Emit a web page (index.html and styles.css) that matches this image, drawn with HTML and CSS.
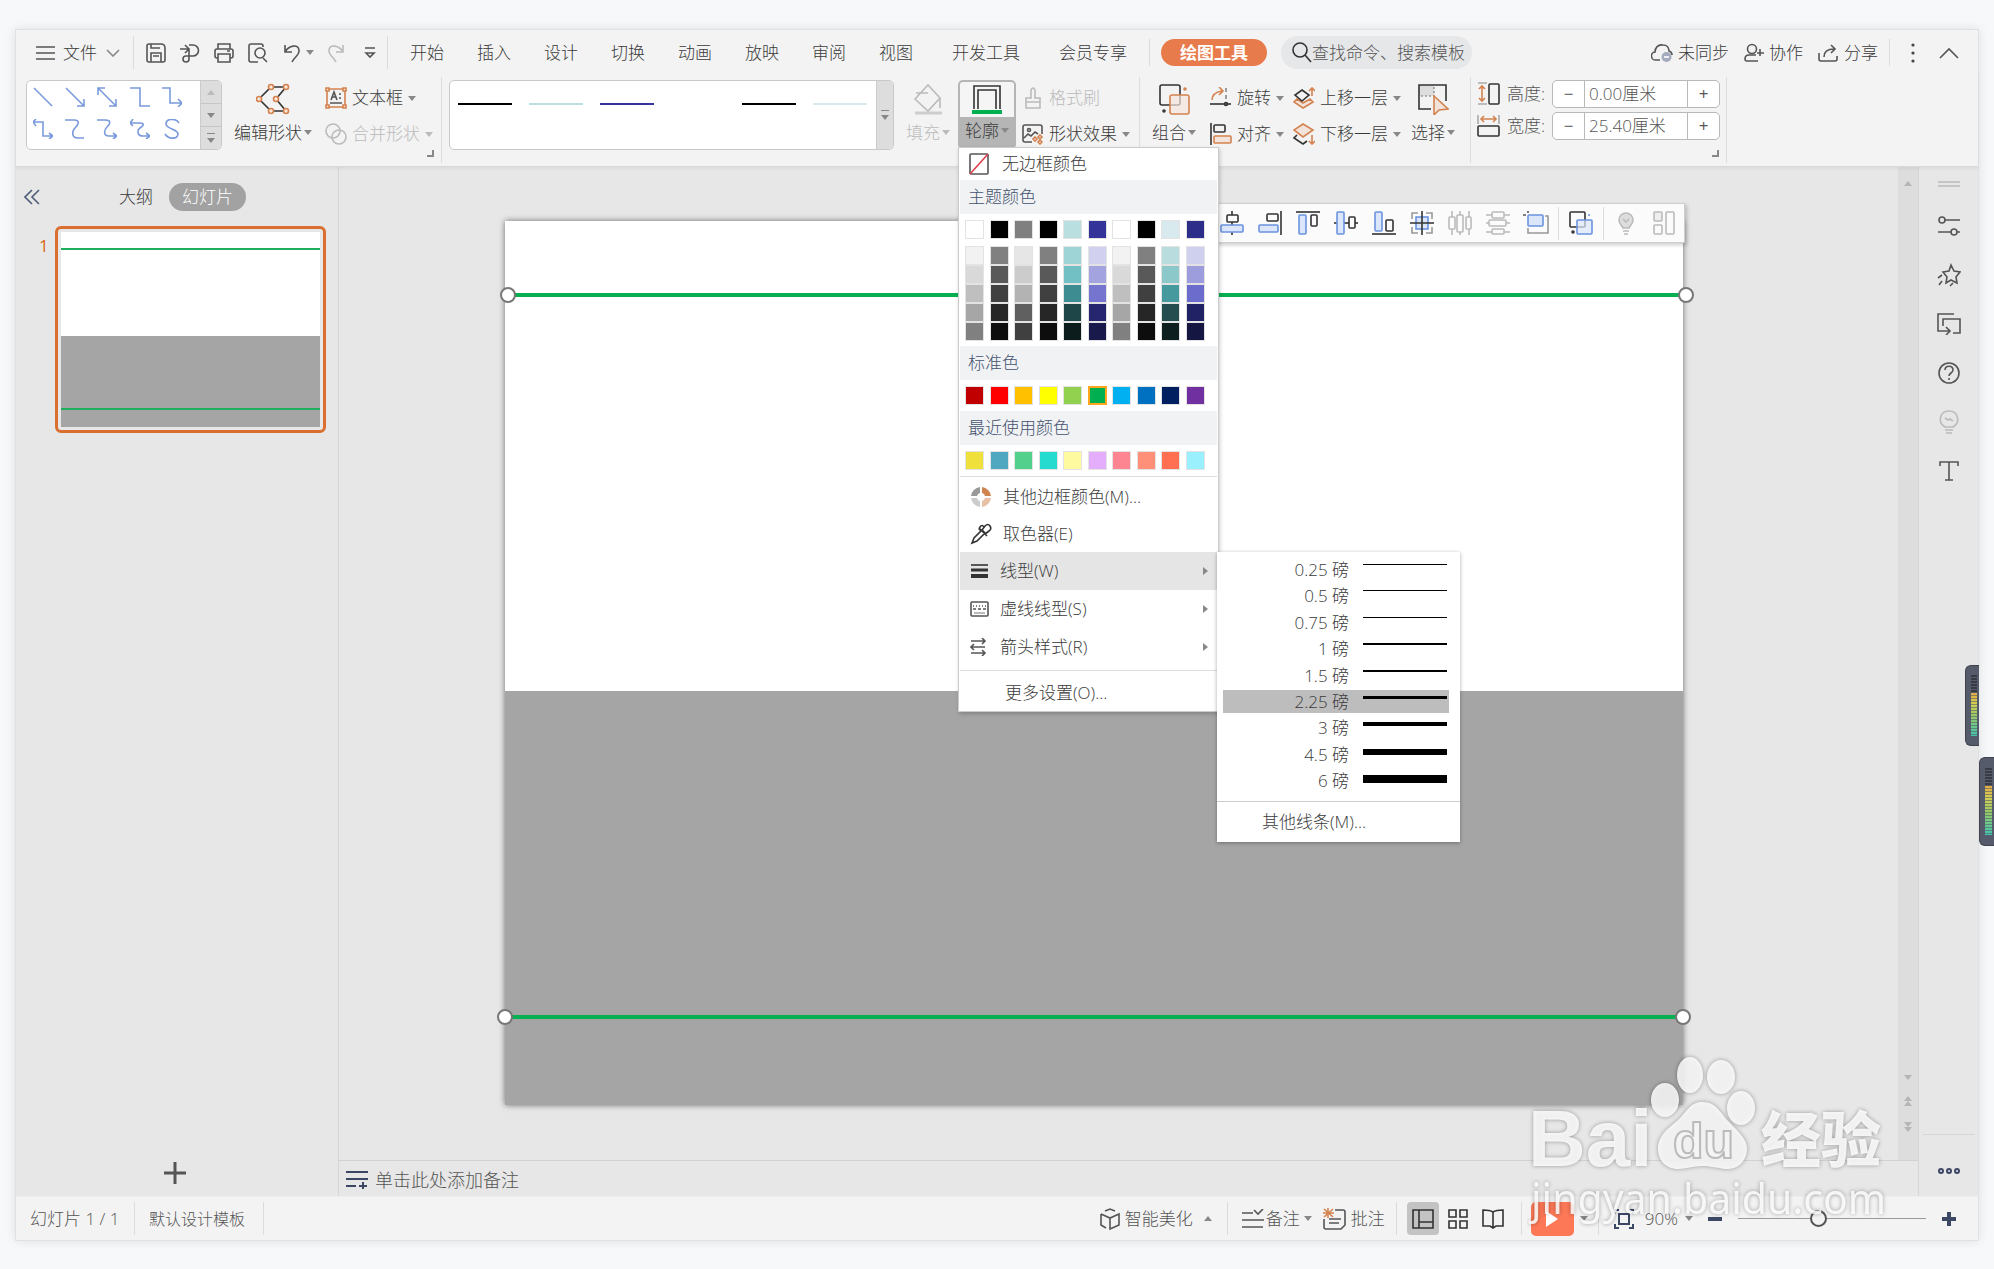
FILE: index.html
```html
<!DOCTYPE html>
<html lang="zh-CN">
<head>
<meta charset="utf-8">
<title>演示文稿</title>
<link rel="stylesheet" href="styles.css">
</head>
<body>
<div class="window">
  <header class="menubar">
    <button class="file"><svg class="i" width="20" height="16" viewBox="0 0 20 16"><path d="M0 2h19M0 8h19M0 14h19"/></svg><span>文件</span><svg class="i thin" width="14" height="8" viewBox="0 0 14 8"><path d="M1 1l6 6 6-6"/></svg></button>
    <i class="vsep"></i>
    <div class="quick">
      <button aria-label="保存"><svg class="i" width="20" height="20" viewBox="0 0 20 20"><path d="M1 3q0-2 2-2h12q4 0 4 4v12q0 2-2 2H3q-2 0-2-2zM5 1v4h9M5 19v-9h10v9M7 13h6"/></svg></button>
      <button aria-label="输出"><svg class="i" width="20" height="20" viewBox="0 0 20 20"><path d="M0 6h8M5 2l4 4-4 4M9 2h4a5 5 0 010 11H6a3 3 0 103 3V6"/></svg></button>
      <button aria-label="打印"><svg class="i" width="20" height="20" viewBox="0 0 20 20"><path d="M4 6V1h12v5M4 15H3q-2 0-2-2V8q0-2 2-2h14q2 0 2 2v5q0 2-2 2h-1M4 11h12v8H4zM13 8h3"/></svg></button>
      <button aria-label="预览"><svg class="i" width="20" height="20" viewBox="0 0 20 20"><path d="M10 19H3q-2 0-2-2V3q0-2 2-2h10q2 0 2 2v1M15 15l4 4"/><circle cx="12" cy="10" r="5"/></svg></button>
      <button aria-label="撤销"><svg class="i" width="18" height="20" viewBox="0 0 18 20"><path d="M2 2v7h7M2 9c4-7 13-8 14-2 1 5-5 7-7 12"/></svg></button>
      <i class="caret tight"></i>
      <button class="faint" aria-label="恢复"><svg class="i" width="18" height="20" viewBox="0 0 18 20"><path d="M16 2v7H9M16 9C12 2 3 1 2 7c-1 5 5 7 7 12"/></svg></button>
      <button aria-label="更多"><svg class="i" width="12" height="12" viewBox="0 0 12 12"><path d="M1 1h10M2 6l4 4 4-4z"/></svg></button>
    </div>
    <i class="vsep"></i>
    <nav class="tabs">
      <a href="#">开始</a><a href="#">插入</a><a href="#">设计</a><a href="#">切换</a><a href="#">动画</a><a href="#">放映</a><a href="#">审阅</a><a href="#">视图</a><a href="#" class="wide">开发工具</a><a href="#" class="wide">会员专享</a>
    </nav>
    <i class="vsep short"></i>
    <a href="#" class="tooltab">绘图工具</a>
    <label class="search"><svg class="i dark" width="21" height="21" viewBox="0 0 21 21"><circle cx="9" cy="8" r="7"/><path d="M14 13l6 7"/></svg><input type="text" aria-label="查找" placeholder="查找命令、搜索模板"></label>
    <div class="account">
      <button><svg class="i" width="22" height="20" viewBox="0 0 22 20"><path d="M9 17H5a4 4 0 01-1-8C4 5 7 1 12 2c4 0 6 3 6 6q3 1 3 4"/><circle cx="15.500" cy="14" r="5" fill="#a3abbd" stroke="none"/><path d="M13 14h5" stroke="#fff"/></svg><span>未同步</span></button>
      <button><svg class="i" width="20" height="20" viewBox="0 0 20 20"><circle cx="8" cy="6" r="4.500"/><path d="M14 18H3q-2 0-2-2 0-4 4-4h7M16 6v7M13 10h7"/></svg><span>协作</span></button>
      <button><svg class="i" width="21" height="20" viewBox="0 0 21 20"><path d="M1 10v6q0 2 2 2h14q2 0 2-2v-3M6 14c0-6 4-8 10-8M13 2l4 4-4 4"/></svg><span>分享</span></button>
    </div>
    <i class="vsep short"></i>
    <button class="dots" aria-label="菜单"><svg width="4" height="20" viewBox="0 0 4 20"><circle cx="2" cy="2" r="1.600"/><circle cx="2" cy="10" r="1.600"/><circle cx="2" cy="18" r="1.600"/></svg></button>
    <button class="fold" aria-label="收起"><svg class="i" width="20" height="12" viewBox="0 0 20 12"><path d="M1 11l9-9 9 9"/></svg></button>
  </header>

  <section class="ribbon">
    <div class="group first">
      <div class="gallery shapes">
        <div class="cells">
          <button><svg class="i" width="20" height="20" viewBox="0 0 20 20"><path d="M1 1l18 18"/></svg></button>
          <button><svg class="i" width="20" height="20" viewBox="0 0 20 20"><path d="M1 1l18 18M12 19h7v-7"/></svg></button>
          <button><svg class="i" width="20" height="20" viewBox="0 0 20 20"><path d="M1 1l18 18M12 19h7v-7M1 8V1h7"/></svg></button>
          <button><svg class="i" width="20" height="20" viewBox="0 0 20 20"><path d="M0 1h10v18h10"/></svg></button>
          <button><svg class="i" width="20" height="20" viewBox="0 0 20 20"><path d="M0 1h8v15h11M16 12l4 4-4 4"/></svg></button>
          <button><svg class="i" width="20" height="20" viewBox="0 0 20 20"><path d="M0 3h10v14h9M3 0L0 3l3 4M16 14l4 3-4 3"/></svg></button>
          <button><svg class="i" width="20" height="20" viewBox="0 0 20 20"><path d="M0 1h9c7 0 4 5 1 8s-4 10 3 10h6"/></svg></button>
          <button><svg class="i" width="20" height="20" viewBox="0 0 20 20"><path d="M0 1h8c7 0 5 4 2 7s-4 9 2 9h7M16 14l4 3-4 3"/></svg></button>
          <button><svg class="i" width="20" height="20" viewBox="0 0 20 20"><path d="M0 4h9c7 0 4 3 1 5s-3 8 3 8h6M3 0L0 4l3 3M16 14l4 3-4 3"/></svg></button>
          <button><svg class="i" width="20" height="20" viewBox="0 0 20 20"><path d="M17 4C14-1 4-1 4 5c0 5 12 5 12 10 0 6-10 5-13 0"/></svg></button>
        </div>
        <div class="scroll"><button aria-label="上"><i class="caret up faint"></i></button><button aria-label="下"><i class="caret"></i></button><button aria-label="展开"><i class="caret bar"></i></button></div>
      </div>
      <button class="tall edit"><span class="pic"><svg class="i dark" width="34" height="32" viewBox="0 0 34 32"><path d="M15 4h15L20 16l10 12H15L3 16z"/><g class="node"><circle cx="15" cy="4" r="2.500"/><circle cx="30" cy="4" r="2.500"/><circle cx="3" cy="16" r="2.500"/><circle cx="20" cy="16" r="2.500"/><circle cx="15" cy="28" r="2.500"/><circle cx="30" cy="28" r="2.500"/></g></svg></span><span class="cap">编辑形状<i class="caret"></i></span></button>
      <div class="stack s1">
        <button><svg class="i" width="22" height="22" viewBox="0 0 22 22"><path class="or" d="M2 4v14M20 4v14M4 2h14M4 20h14"/><g class="node"><path d="M1 1h3v3H1zM18 1h3v3h-3zM1 18h3v3H1zM18 18h3v3h-3z"/></g><path d="M6 13l3-8 3 8M7 10h4M14 7h2M14 11h2M5 16h12"/></svg>文本框<i class="caret"></i></button>
        <button class="faint"><svg class="i" width="22" height="22" viewBox="0 0 22 22"><circle cx="8" cy="8" r="7"/><circle cx="14" cy="14" r="7"/></svg>合并形状<i class="caret"></i></button>
      </div>
      <i class="corner"></i>
    </div>

    <div class="group second">
      <div class="gallery lines">
        <div class="presets"><i class="k"></i><i class="t"></i><i class="b"></i><i class="w"></i><i class="k"></i><i class="p"></i></div>
        <div class="scroll"><button aria-label="更多线条"><i class="caret bar"></i></button></div>
      </div>
      <button class="tall fill faint"><span class="pic"><svg class="i" width="32" height="32" viewBox="0 0 32 32"><path d="M3 16L16 2l12 13-12 13zM4 10h12M28 15v10"/><path d="M3 30h27" stroke-width="3" stroke="#ccc"/></svg></span><span class="cap">填充<i class="caret"></i></span></button>
      <div class="outline">
        <button class="tall on"><span class="pic"><svg class="i dark" width="30" height="30" viewBox="0 0 30 30"><path d="M2 25V2h26v23M6 25V6h18v19"/><path d="M0 28h30" stroke="#00b050" stroke-width="4"/></svg></span><span class="cap">轮廓<i class="caret"></i></span></button>
        <div class="menu">
          <button class="item none"><svg class="i" width="20" height="22" viewBox="0 0 20 22"><rect x="1" y="1" width="18" height="20" rx="1"/><path d="M1 21L19 1" stroke="#d9414e"/></svg>无边框颜色</button>
          <h3>主题颜色</h3>
          <div class="swatches" data-set="theme"></div>
          <div class="swatches shades" data-set="shades"></div>
          <h3>标准色</h3>
          <div class="swatches" data-set="standard"></div>
          <h3>最近使用颜色</h3>
          <div class="swatches" data-set="recent"></div>
          <hr>
          <button class="item mid"><svg width="22" height="22" viewBox="0 0 22 22"><path d="M10 1v6a4 4 0 00-3 3H1a10 10 0 019-9" fill="#999"/><path d="M12 1v6a4 4 0 013 3h6a10 10 0 00-9-9" fill="#d08452"/><path d="M10 21v-6a4 4 0 01-3-3H1a10 10 0 009 9" fill="#ccc"/><path d="M12 21v-6a4 4 0 003-3h6a10 10 0 01-9 9" fill="#e8c0a5"/></svg>其他边框颜色(M)...</button>
          <button class="item mid"><svg class="i dark" width="22" height="22" viewBox="0 0 22 22"><path d="M2 20l2-5 8-8 3 3-8 8zM9 5l8 8M12 7l3-4q3-3 5 0t-1 5l-4 3M14 4q-2-3-4 0t1 3"/></svg>取色器(E)</button>
          <div class="sub">
            <button class="item big on"><svg class="i dark" width="19" height="16" viewBox="0 0 19 16"><path d="M1 2h17" /><path d="M1 7h17" stroke-width="3"/><path d="M1 13h17" stroke-width="4"/></svg>线型(W)<i class="right"></i></button>
            <div class="weights">
              <ul>
                <li><span>0.25 磅</span><i style="height:1px"></i></li>
                <li><span>0.5 磅</span><i style="height:1px"></i></li>
                <li><span>0.75 磅</span><i style="height:1px"></i></li>
                <li><span>1 磅</span><i style="height:2px"></i></li>
                <li><span>1.5 磅</span><i style="height:2px"></i></li>
                <li class="on"><span>2.25 磅</span><i style="height:3px"></i></li>
                <li><span>3 磅</span><i style="height:4px"></i></li>
                <li><span>4.5 磅</span><i style="height:6px"></i></li>
                <li><span>6 磅</span><i style="height:8px"></i></li>
              </ul>
              <button>其他线条(M)...</button>
            </div>
          </div>
          <button class="item big"><svg class="i" width="19" height="16" viewBox="0 0 19 16"><rect x="1" y="1" width="17" height="14" rx="1"/><path d="M3 5h13" stroke-dasharray="1 2"/><path d="M3 8h13" stroke-dasharray="3 2"/><path d="M4 12h11" stroke="#aaa"/></svg>虚线线型(S)<i class="right"></i></button>
          <button class="item big"><svg class="i" width="19" height="18" viewBox="0 0 19 18"><path d="M1 3h14M12 0l3 3-3 3M15 9H1M4 6L1 9l3 3M1 15h14M12 12l3 3-3 3"/></svg>箭头样式(R)<i class="right"></i></button>
          <hr class="gap">
          <button class="item last">更多设置(O)...</button>
        </div>
      </div>
      <div class="stack s2">
        <button class="faint"><svg class="i" width="22" height="22" viewBox="0 0 22 22"><path d="M9 11V3q2-4 4 0v8h5v10H4V11zM4 15h14"/></svg>格式刷</button>
        <button><svg class="i" width="22" height="22" viewBox="0 0 22 22"><path d="M10 19H3q-2 0-2-2V4q0-2 2-2h15q2 0 2 2v7M2 15l4-4 3 2 4-4 3 2"/><circle cx="7" cy="7" r="1.500"/><path class="or" d="M13 14l2 2-2 2-2-2zM18 12l2 2-2 2-2-2zM18 17l2 2-2 2-2-2z"/></svg>形状效果<i class="caret"></i></button>
      </div>
    </div>

    <div class="group third">
      <button class="tall combine"><span class="pic"><svg class="i dark" width="32" height="32" viewBox="0 0 32 32"><rect x="2" y="2" width="20" height="20" rx="2"/><rect class="orf" x="12" y="12" width="19" height="19" rx="2" fill-opacity=".7"/><circle cx="27" cy="6" r="1" class="or"/><circle cx="6" cy="28" r="1"/></svg></span><span class="cap">组合<i class="caret"></i></span></button>
      <div class="stack s3">
        <button><svg class="i dark" width="22" height="22" viewBox="0 0 22 22"><path class="or" d="M2 13C2 7 6 5 12 4M9 0l4 4-4 4"/><path d="M0 17h21"/><path d="M16 1v20" stroke-dasharray="4 3" stroke="#888"/><circle cx="16" cy="17" r="1.500"/></svg>旋转<i class="caret"></i></button>
        <button><svg class="i dark" width="22" height="22" viewBox="0 0 22 22"><path d="M1 0v22"/><rect x="4" y="2" width="11" height="7" rx="1"/><rect class="orf" x="4" y="13" width="17" height="7" rx="1"/></svg>对齐<i class="caret"></i></button>
      </div>
      <div class="stack s4">
        <button><svg class="i dark" width="22" height="22" viewBox="0 0 22 22"><path class="orf" d="M4 12l-3 3 9 6 10-6-3-3-7 4z"/><path d="M9 3l7 5-7 6-7-6z"/><path class="or" d="M19 9V1M16 4l3-3 3 3"/></svg>上移一层<i class="caret"></i></button>
        <button><svg class="i dark" width="22" height="22" viewBox="0 0 22 22"><path d="M4 12l-3 3 9 6 4-3"/><path class="orf" d="M10 1l10 6-10 7L1 7z"/><path class="or" d="M19 12v9M16 18l3 3 3-3"/></svg>下移一层<i class="caret"></i></button>
      </div>
      <button class="tall select"><span class="pic"><svg class="i dark" width="32" height="32" viewBox="0 0 32 32"><path d="M2 2h15v11H2z" fill="#ddd" stroke="none"/><path d="M14 26H2V2h27v16"/><path d="M4 13h12M17 4v10" stroke="#999" stroke-dasharray="2 2"/><path class="orf" d="M17 13l14 13-9 1-5 5z"/></svg></span><span class="cap">选择<i class="caret"></i></span></button>
    </div>

    <div class="group fourth">
      <div class="dim"><svg class="i dark" width="24" height="24" viewBox="0 0 24 24"><path d="M1 1h9M1 22h9" stroke="#aaa"/><path class="or" d="M5 4v15M2 7l3-3 3 3M2 16l3 3 3-3"/><rect x="12" y="2" width="10" height="20" rx="1"/></svg><label for="h">高度:</label><div class="spin"><button aria-label="减小高度">−</button><input id="h" type="text" value="0.00厘米"><button aria-label="增大高度">+</button></div></div>
      <div class="dim"><svg class="i dark" width="24" height="24" viewBox="0 0 24 24"><path d="M1 1v9M22 1v9" stroke="#aaa"/><path class="or" d="M4 5h15M7 2L4 5l3 3M16 2l3 3-3 3"/><rect x="1" y="12" width="21" height="10" rx="1"/></svg><label for="w">宽度:</label><div class="spin"><button aria-label="减小宽度">−</button><input id="w" type="text" value="25.40厘米"><button aria-label="增大宽度">+</button></div></div>
      <i class="corner"></i>
    </div>
  </section>

  <main>
    <aside class="outline-pane">
      <div class="pane-head"><button class="collapse" aria-label="折叠"><svg class="i" width="16" height="16" viewBox="0 0 16 16"><path d="M8 1L1 8l7 7M15 1L8 8l7 7"/></svg></button><a href="#">大纲</a><a href="#" class="on">幻灯片</a></div>
      <div class="thumb-row"><span>1</span><div class="thumb"><div class="mini"><i class="block"></i><i class="ln a"></i><i class="ln z"></i></div></div></div>
      <button class="add" aria-label="新建幻灯片"><svg class="i" width="22" height="22" viewBox="0 0 22 22"><path d="M11 0v22M0 11h22"/></svg></button>
    </aside>
    <div class="work">
      <div class="upper">
        <div class="canvas">
          <div class="slide">
            <i class="block"></i>
            <div class="ln a"><i></i><i></i></div>
            <div class="ln z"><i></i><i></i></div>
            <div class="floatbar">
              <button><svg class="i dark" width="24" height="24" viewBox="0 0 24 24"><path d="M12 0v24"/><rect x="7" y="4" width="11" height="7" rx="1" fill="#fbfbfb"/><rect class="bl" x="1" y="14" width="22" height="7" rx="1"/></svg></button>
              <button><svg class="i dark" width="24" height="24" viewBox="0 0 24 24"><path d="M23 0v24"/><rect x="9" y="3" width="11" height="7" rx="1"/><rect class="bl" x="1" y="14" width="19" height="7" rx="1"/></svg></button>
              <button><svg class="i dark" width="24" height="24" viewBox="0 0 24 24"><path d="M0 1h24"/><rect class="bl" x="3" y="4" width="7" height="19" rx="1"/><rect x="15" y="4" width="6" height="11" rx="1"/></svg></button>
              <button><svg class="i dark" width="24" height="24" viewBox="0 0 24 24"><path d="M0 12h24"/><rect class="bl" x="3" y="1" width="7" height="22" rx="1"/><rect x="15" y="6" width="6" height="11" rx="1" fill="#fbfbfb"/></svg></button>
              <button><svg class="i dark" width="24" height="24" viewBox="0 0 24 24"><path d="M0 23h24"/><rect class="bl" x="3" y="1" width="7" height="19" rx="1"/><rect x="14" y="9" width="7" height="11" rx="1"/></svg></button>
              <button><svg class="i dark" width="24" height="24" viewBox="0 0 24 24"><path d="M2 8V2h6M16 2h6v6M22 16v6h-6M8 22H2v-6" stroke="#999"/><rect class="bl" x="6" y="6" width="12" height="12"/><path d="M12 0v24M0 12h24"/></svg></button>
              <button class="faint"><svg class="i" width="24" height="24" viewBox="0 0 24 24"><path d="M4 0v24M12 0v24M21 0v24"/><g fill="#fbfbfb"><rect x="1" y="6" width="6" height="12" rx="1"/><rect x="9" y="4" width="6" height="17" rx="1"/><rect x="18" y="6" width="5" height="12" rx="1"/></g></svg></button>
              <button class="faint"><svg class="i" width="24" height="24" viewBox="0 0 24 24"><path d="M0 4h24M0 12h24M0 21h24"/><g fill="#fbfbfb"><rect x="6" y="1" width="12" height="6" rx="1"/><rect x="3" y="9" width="17" height="6" rx="1"/><rect x="6" y="18" width="12" height="5" rx="1"/></g></svg></button>
              <button><svg class="i" width="26" height="24" viewBox="0 0 26 24"><path d="M5 17v5h20V5h-3" stroke="#999"/><rect class="bl" x="5" y="4" width="15" height="11" rx="1"/><path d="M0 4h3M5 0v2"/></svg></button>
              <i class="vsep"></i>
              <button><svg class="i dark" width="24" height="24" viewBox="0 0 24 24"><rect x="1" y="1" width="15" height="15" rx="1"/><rect class="bl" x="8" y="9" width="15" height="14" rx="1" fill-opacity=".7"/><circle cx="20" cy="4" r="1" fill="#6b93e0" stroke="none"/><circle cx="4" cy="21" r="1"/></svg></button>
              <i class="vsep"></i>
              <button class="faint"><svg class="i" width="20" height="26" viewBox="0 0 20 26"><path d="M7 18c0-2-4-3-4-8a7 7 0 0114 0c0 5-4 6-4 8z" fill="#ddd"/><path d="M7 21h6M8 24h4M7 9l3 3 3-3"/></svg></button>
              <button class="faint"><svg class="i" width="22" height="24" viewBox="0 0 22 24"><rect x="1" y="1" width="8" height="9" rx="1" fill="#eee"/><rect x="1" y="14" width="8" height="9" rx="1"/><rect x="13" y="1" width="8" height="22" rx="1"/></svg></button>
            </div>
          </div>
        </div>
        <div class="vscroll"><i class="caret up"></i><div class="pager"><i class="caret"></i><span><i class="caret up"></i><i class="caret up"></i></span><span><i class="caret"></i><i class="caret"></i></span></div></div>
      </div>
      <div class="notes"><svg class="i navy" width="22" height="20" viewBox="0 0 22 20"><path d="M0 2h22M0 9h22M0 16h10M17 12v7M13 16h8"/></svg><span>单击此处添加备注</span></div>
    </div>
    <aside class="tools">
      <svg class="i grip" width="22" height="6" viewBox="0 0 22 6"><path d="M0 1h22M0 5h22"/></svg>
      <button><svg class="i" width="22" height="22" viewBox="0 0 22 22"><circle cx="4" cy="5" r="3"/><path d="M7 5h15M0 17h13M19 17h3"/><circle cx="16" cy="17" r="3"/></svg></button>
      <button><svg class="i" width="24" height="24" viewBox="0 0 24 24"><path d="M14 2l3 6 6 1-4 5 1 6-6-3-5 3 1-6-4-5 6-1zM5 12l-4 3M5 18l-3 4M16 20l-3 3"/></svg></button>
      <button><svg class="i" width="24" height="22" viewBox="0 0 24 22"><path d="M17 1H1v17h12M9 14l4 4-4 4M6 13V6h17v14h-7"/></svg></button>
      <button><svg class="i" width="22" height="22" viewBox="0 0 22 22"><circle cx="11" cy="11" r="10"/><path d="M7 8c0-5 8-5 8 0 0 3-4 3-4 6M11 16v2"/></svg></button>
      <button class="faint"><svg class="i" width="20" height="24" viewBox="0 0 20 24"><path d="M6 17c-8-5-5-16 4-16s12 11 4 16zM6 20h8M7 23h6M6 8l3 2 2-1 3 2"/></svg></button>
      <button><svg class="i" width="20" height="20" viewBox="0 0 20 20"><path d="M1 5V1h18v4M10 1v18M6 19h8"/></svg></button>
      <div class="more"><svg class="i navy" width="24" height="8" viewBox="0 0 24 8"><circle cx="4" cy="4" r="2"/><circle cx="12" cy="4" r="2"/><circle cx="20" cy="4" r="2"/></svg></div>
    </aside>
  </main>

  <footer class="status">
    <span class="page">幻灯片 1 / 1</span><i class="vsep"></i><span class="tpl">默认设计模板</span><i class="vsep"></i>
    <div class="right-tools">
      <button class="smart"><svg class="i" width="20" height="22" viewBox="0 0 20 22"><path d="M5 3l5-2 5 2M1 6l9 4 9-4v11l-9 4V10M1 6v11l5 3"/></svg>智能美化<i class="caret up"></i></button>
      <i class="vsep"></i>
      <button class="memo"><svg class="i" width="22" height="20" viewBox="0 0 22 20"><path d="M0 4h11M12 1l4 4 5-5M0 11h22M0 18h21"/></svg>备注<i class="caret"></i></button>
      <button class="comment"><svg class="i" width="23" height="22" viewBox="0 0 23 22"><path d="M12 2h8q2 0 2 2v13l-4 4H3q-2 0-2-2v-8M6 11h12M6 15h10"/><path class="or" d="M1 1l9 8M10 1L1 9M5 0v10M0 5h11"/></svg>批注</button>
      <i class="vsep"></i>
      <button class="view on" aria-label="普通"><svg class="i dark" width="22" height="20" viewBox="0 0 22 20"><path d="M1 1h20v18H1zM7 1v18M7 13h14"/></svg></button>
      <button class="view" aria-label="浏览"><svg class="i dark" width="20" height="20" viewBox="0 0 20 20"><path d="M1 1h7v7H1zM12 1h7v7h-7zM1 12h7v7H1zM12 12h7v7h-7z"/></svg></button>
      <button class="view" aria-label="阅读"><svg class="i dark" width="22" height="20" viewBox="0 0 22 20"><path d="M11 3Q8 1 1 1v16h7l3 2 3-2h7V1q-7 0-10 2zv15"/></svg></button>
      <i class="vsep"></i>
      <button class="play" aria-label="放映"><svg width="14" height="16" viewBox="0 0 14 16"><path d="M1 0l12 8-12 8z" fill="#fff"/></svg></button><i class="caret"></i>
      <i class="vsep"></i>
      <button class="zoom"><svg class="i navy" width="20" height="20" viewBox="0 0 20 20"><path d="M1 5V1h4M15 1h4v4M19 15v4h-4M5 19H1v-4M5 5h10v10H5z"/></svg>90%<i class="caret"></i></button>
      <button class="step" aria-label="缩小"><svg class="i navy thick" width="14" height="14" viewBox="0 0 14 14"><path d="M0 7h14"/></svg></button>
      <input type="range" aria-label="缩放" min="0" max="100" value="42">
      <button class="step" aria-label="放大"><svg class="i navy thick" width="14" height="14" viewBox="0 0 14 14"><path d="M0 7h14M7 0v14"/></svg></button>
    </div>
  </footer>
</div>

<div class="meter m1"><i class="off"></i><i class="lit"></i></div>
<div class="meter m2"><i class="off"></i><i class="lit"></i></div>

<svg class="brand" width="370" height="190" viewBox="0 0 370 190">
  <g class="shape">
    <ellipse cx="138" cy="50" rx="14" ry="17"/>
    <ellipse cx="163" cy="25" rx="13" ry="18"/>
    <ellipse cx="194" cy="27" rx="14" ry="17"/>
    <ellipse cx="214" cy="58" rx="14" ry="17"/>
    <path d="M175 52c15 0 18 11 27 20s19 18 18 28c-1 14-12 20-22 19-9-1-14-3-23-3s-16 3-24 3c-12 0-20-9-20-20 0-14 11-21 20-29s12-18 24-18z"/>
    <text x="1" y="116" class="latin">Bai</text>
    <text x="234" y="112" class="han">经验</text>
    <text x="4" y="164" class="url">jingyan.baidu.com</text>
  </g>
  <text x="146" y="108" class="du">du</text>
</svg>
<script src="swatches.js"></script>
</body>
</html>
```
FILE: swatches.js
```js
const gray = ['f2f2f2', 'd9d9d9', 'bfbfbf', 'a6a6a6', '808080'];
const black = ['808080', '595959', '404040', '262626', '0d0d0d'];
const columns = [
  gray, black, ['e6e6e6', 'cccccc', 'b3b3b3', '606060', '404040'], black,
  ['9fd4d6', '72bfc4', '3c8c92', '1e4649', '0c1c1d'],
  ['d1d1ef', 'a3a3df', '7575cf', '262670', '19194b'],
  gray, black,
  ['b9dddf', '8cc7ca', '469a9e', '234d4f', '0e1f20'],
  ['cfcfee', '9d9ddd', '6c6ccc', '212165', '161643']
];
const sets = {
  theme: ['ffffff', '000000', '808080', '000000', 'badfe1', '333399', 'ffffff', '000000', 'd8eaed', '2d2d8a'],
  shades: [0, 1, 2, 3, 4].flatMap(r => columns.map(c => c[r])),
  standard: ['c00000', 'ff0000', 'ffc000', 'ffff00', '92d050', '00b050', '00b0f0', '0070c0', '002060', '7030a0'],
  recent: ['efe03c', '4fa8c0', '53d18c', '25dbd0', 'fdfaa0', 'e5aefd', 'fd8592', 'fe8f79', 'ff7052', '9bf0fd']
};
document.querySelectorAll('.swatches').forEach(box => {
  sets[box.dataset.set].forEach(c => {
    const b = document.createElement('button');
    b.style.background = '#' + c;
    b.setAttribute('aria-label', '#' + c);
    if (c === '00b050') b.className = 'picked';
    box.append(b);
  });
});
```
FILE: styles.css
```css
* { box-sizing: border-box; }
body {
  margin: 0;
  min-height: 100vh;
  display: flex;
  flex-direction: column;
  position: relative;
  overflow-x: hidden;
  background: #f7f8fa;
  color: #3a3a3a;
  font: 300 17px/24px "Open Sans", "Noto Sans CJK SC", sans-serif;
}
button, input { font: inherit; color: inherit; background: none; border: 0; padding: 0; margin: 0; }
button { display: flex; align-items: center; white-space: nowrap; }
a { color: inherit; text-decoration: none; white-space: nowrap; }
svg { flex: none; display: block; }
.i { fill: none; stroke: #555; stroke-width: 1.6; }
.i.dark { stroke: #333; }
.i.thin { stroke: #888; }
.i.navy { stroke: #3b4763; stroke-width: 2; }
.i.thick { stroke-width: 4; }
.or { stroke: #d4824f; }
.orf { stroke: #d4824f; fill: #f3e4db; }
.bl { stroke: #6b93e0; fill: #dbe6fa; }
.node { stroke: #d4824f; fill: #f8e8dc; }
.faint { color: #bbb; }
.faint .i { stroke: #bbb; }

.window {
  flex: 1;
  display: flex;
  flex-direction: column;
  margin: 29px 15px 28px;
  border: 1px solid #dfe1e3;
  background: #f3f3f3;
  box-shadow: 0 0 10px #0000001a;
}
.vsep { flex: none; width: 1px; height: 33px; background: #dcdcdc; }
.vsep.short { height: 27px; }
.caret { flex: none; border: 4px solid transparent; border-top: 5px solid #888; border-bottom: 0; }
.caret.up { border-top: 0; border-bottom: 5px solid #888; }
.faint .caret { border-top-color: #bbb; }
.caret.up.faint { border-bottom-color: #bbb; }
.caret.bar { position: relative; margin-top: 4px; }
.caret.bar::before { content: ""; position: absolute; left: -4px; top: -10px; width: 8px; height: 1px; background: #888; }

/* menu bar */
.menubar { display: flex; align-items: center; height: 45px; padding-left: 20px; }
.file { gap: 7px; width: 97px; }
.file svg:last-child { margin-left: 2px; }
.quick { display: flex; align-items: center; padding-left: 5px; }
.quick button { width: 34px; justify-content: center; }
.caret.tight { margin: 0 5px 0 -3px; }
.tabs { display: flex; gap: 33px; margin: 0 22px; }
.tabs .wide { margin-left: 6px; }
.tooltab { margin: 0 14px 0 11px; padding: 0 19px; line-height: 27px; height: 27px; border-radius: 14px; background: #e87b4b; color: #fff; font-size: 17px; font-weight: 700; }
.search { display: flex; align-items: center; width: 191px; height: 33px; padding-left: 10px; border-radius: 17px; background: #e6e7e9; }
.search input { width: 160px; }
.search input::placeholder { color: #555; opacity: 1; }
.account { display: flex; gap: 15px; margin-left: auto; margin-right: 11px; }
.account button { gap: 5px; }
.dots { margin: 0 24px 0 21px; fill: #444; }
.fold { margin-right: 19px; }

/* ribbon */
.ribbon { display: flex; height: 92px; padding: 2px 0 3px; border-bottom: 1px solid #d9d9d9; position: relative; z-index: 5; box-shadow: 0 2px 3px #0000000d; }
.group { flex: none; display: flex; align-items: flex-start; padding-top: 3px; border-right: 1px solid #dedede; position: relative; }
.first { width: 426px; padding-left: 10px; }
.second { width: 698px; padding-left: 7px; }
.third { width: 331px; padding-left: 4px; }
.fourth { width: 256px; padding-left: 6px; flex-direction: column; gap: 4px; }
.corner { position: absolute; right: 7px; bottom: 6px; width: 7px; height: 7px; border: solid #888; border-width: 0 2px 2px 0; }
.gallery { display: flex; height: 70px; border: 1px solid #c9c9c9; border-radius: 5px; background: #fff; overflow: hidden; }
.shapes { width: 196px; }
.cells { flex: 1; display: grid; grid-template: 32px 32px / repeat(5, 1fr); padding-right: 12px; }
.cells button { justify-content: center; }
.cells .i { stroke: #7a9bdb; }
.scroll { width: 21px; display: flex; flex-direction: column; background: #ddd; border-left: 1px solid #ccc; }
.scroll button { flex: 1; justify-content: center; }
.scroll button + button { border-top: 1px solid #c6c6c6; }
.lines { width: 445px; }
.lines .scroll { width: 17px; }
.presets { flex: 1; display: flex; gap: 17px; padding: 22px 8px; }
.presets i { width: 54px; height: 2px; }
.k { background: #000; } .t { background: #b9dfe1; } .b { background: #333399; } .p { background: #d8eaed; }
.tall { flex-direction: column; height: 67px; }
.pic { display: flex; align-items: center; justify-content: center; height: 38px; }
.cap { display: flex; align-items: center; gap: 2px; height: 29px; }
.edit { margin-left: 8px; width: 86px; }
.fill { margin-left: 5px; width: 58px; }
.outline { position: relative; margin-left: 1px; }
.on.tall { width: 58px; padding: 2px; border-radius: 5px 5px 2px 2px; background: #b5b5b5; }
.on.tall .pic { width: 54px; height: 36px; background: #f5f5f5; border-radius: 3px 3px 0 0; }
.combine { width: 60px; }
.select { margin-left: 5px; width: 54px; }
.stack { display: grid; grid-template-rows: 36px 36px; }
.stack button { gap: 5px; }
.s1 { margin-left: 9px; }
.s2 { margin-left: 6px; }
.s3 { margin-left: 6px; }
.s4 { margin-left: 9px; }
.dim { display: flex; align-items: center; height: 28px; color: #555; }
.dim label { width: 45px; margin-left: 6px; }
.spin { display: flex; width: 168px; height: 28px; border: 1px solid #b9b9b9; border-radius: 5px; background: #fff; }
.spin button { flex: none; width: 31px; justify-content: center; font-weight: 400; }
.spin input { flex: 1; min-width: 0; padding-left: 4px; border: solid #b9b9b9; border-width: 0 1px; }

/* outline colour menu */
.menu { position: absolute; left: 0; top: 67px; width: 261px; border: 1px solid #ccc; background: #fff; box-shadow: 1px 2px 4px #0003; z-index: 10; }
.menu h3 { margin: 0 1px; padding-left: 8px; height: 34px; line-height: 34px; font-size: 17px; font-weight: 300; color: #44526f; background: #f1f2f4; }
.menu hr { margin: 0 1px; border: 0; border-top: 1px solid #ddd; }
.menu .gap { margin-top: 4px; }
.item { width: 258px; margin-left: 1px; padding-left: 10px; gap: 11px; height: 36px; }
.item.none { height: 32px; gap: 13px; padding-left: 9px; }
.item.big { height: 38px; }
.item.on { background: #e5e5e5; }
.item.last { padding: 4px 0 0 45px; height: 40px; }
.item.mid { height: 36px; }
.menu hr + .item.mid { height: 39px; }
.right { margin-left: auto; margin-right: 10px; border: 4px solid transparent; border-left: 5px solid #888; border-right: 0; }
.swatches { display: grid; grid-template-columns: repeat(10, 19px); justify-content: space-between; width: 240px; margin: 6px 0 6px 6px; }
.swatches button { height: 19px; border: 1px solid #e3e3e3; }
.swatches .picked { border: 2px solid #ffa81f; }
.menu .shades { margin-top: 7px; margin-bottom: 5px; }
.sub { position: relative; }
.weights { position: absolute; left: 258px; top: 0; width: 243px; background: #fff; box-shadow: 0 1px 4px #0005; }
.weights ul { list-style: none; margin: 0; padding: 6px 11px 9px 6px; height: 250px; display: flex; flex-direction: column; justify-content: space-between; border-bottom: 1px solid #ccc; }
.weights li { display: flex; height: 23px; line-height: 24px; padding-right: 2px; }
.weights li span { width: 126px; margin-right: 14px; text-align: right; }
.weights li i { flex: 1; margin-top: 6px; background: #000; }
.weights li.on { background: #bdbdbd; }
.weights button { height: 40px; padding-left: 45px; }

/* working area */
main { flex: 1; display: flex; background: #e7e7e7; }
.outline-pane { width: 323px; display: flex; flex-direction: column; border-right: 1px solid #d6d6d6; }
.pane-head { display: flex; align-items: center; padding: 15px 0 0 8px; height: 44px; }
.collapse { width: 95px; }
.collapse .i { stroke: #4f5d7a; }
.pane-head .on { margin-left: 16px; width: 77px; text-align: center; height: 28px; line-height: 28px; border-radius: 14px; background: #a2a2a2; color: #fff; }
.thumb-row { display: flex; margin-top: 15px; padding-left: 21px; color: #d96520; }
.thumb-row span { width: 18px; padding-top: 8px; padding-left: 2px; font-weight: 400; }
.thumb { width: 271px; height: 207px; padding: 3px; border: 3px solid #d96f30; border-radius: 6px; }
.mini { position: relative; height: 100%; background: #fff; }
.mini .block, .slide > .block { position: absolute; left: 0; right: 0; top: 53.200%; bottom: 0; background: #a5a5a5; }
.mini .ln { position: absolute; left: 0; right: 0; height: 2px; background: #1fae5c; }
.mini .a { top: 8%; }
.mini .z { top: 90%; }
.add { align-self: center; margin-top: auto; margin-bottom: 12px; margin-right: 4px; }
.add .i { stroke-width: 3; }
.work { flex: 1; display: flex; flex-direction: column; min-width: 0; }
.upper { flex: 1; display: flex; }
.canvas { flex: 1; display: flex; padding: 54px 215px 55px 166px; }
.slide { flex: 1; position: relative; background: #fff; box-shadow: 0 0 6px #0008; }
.slide .ln { position: absolute; left: 3px; right: -3px; height: 4px; background: #06af51; display: flex; justify-content: space-between; align-items: center; }
.slide .a { top: 8.200%; }
.slide .z { top: 89.800%; left: 0; right: 0; }
.ln > i { width: 16px; height: 16px; margin: 0 -8px; border: 2px solid #777; border-radius: 50%; background: #fff; }
.floatbar { position: absolute; right: -2px; top: -18px; height: 40px; display: flex; align-items: center; background: #fbfbfb; border: 1px solid #cfcfcf; box-shadow: 2px 2px 4px #0003; }
.floatbar button { width: 38px; justify-content: center; }
.floatbar button:last-child { margin-right: 1px; }
.floatbar .vsep { margin: 0 3px; }
.vscroll { width: 20px; display: flex; flex-direction: column; align-items: center; justify-content: space-between; padding: 14px 0 28px; background: #ddd; }
.vscroll .caret { border-top-color: #b5b5b5; border-bottom-color: #b5b5b5; }
.pager { display: flex; flex-direction: column; align-items: center; gap: 16px; }
.pager span { display: flex; flex-direction: column; }
.notes { height: 36px; display: flex; align-items: center; gap: 7px; padding: 2px 0 0 7px; border-top: 1px solid #d2d2d2; font-size: 18px; color: #555; }
.tools { width: 60px; display: flex; flex-direction: column; align-items: center; border-left: 1px solid #d6d6d6; }
.tools .grip { stroke: #bbb; margin: 14px 0 14px; }
.tools button { height: 49px; }
.more { margin-top: auto; width: 52px; height: 62px; border-top: 1px solid #d6d6d6; display: flex; align-items: center; justify-content: center; padding-top: 10px; }

/* status bar */
.status { display: flex; align-items: center; height: 44px; padding-left: 14px; color: #555; border-top: 1px solid #eee; }
.page { width: 104px; }
.tpl { margin: 0 14px; width: 100px; font-size: 16px; }
.right-tools { margin-left: auto; display: flex; align-items: center; }
.smart { gap: 5px; margin-right: 15px; }
.smart .caret { margin-left: 6px; }
.memo { gap: 2px; margin-left: 14px; }
.memo .caret { margin-left: 2px; }
.comment { gap: 5px; margin: 0 11px 0 11px; }
.view { width: 32px; height: 33px; justify-content: center; border-radius: 4px; margin-left: 3px; }
.view.on { background: #c3c3c3; margin: 0 0 0 10px; }
.view + .vsep { margin: 0 9px 0 12px; }
.play { width: 43px; height: 34px; justify-content: center; border-radius: 5px; background: #fc7857; margin-right: 6px; }
.play + .caret { margin-right: 10px; }
.zoom { gap: 11px; margin: 0 15px 0 15px; }
.zoom .caret { margin-left: -4px; }
input[type=range] { appearance: none; width: 188px; height: 20px; margin: 0 16px; background: linear-gradient(#999, #999) center / 100% 1px no-repeat; }
input[type=range]::-webkit-slider-thumb { appearance: none; width: 17px; height: 17px; border: 2px solid #555; border-radius: 50%; background: #f3f3f3; }
.right-tools .step:last-child { margin-right: 22px; }

/* level meters docked at the window edge */
.meter { position: absolute; display: flex; flex-direction: column; background: #565b6b; border: 1px solid #40434d; border-right: 0; border-radius: 6px 0 0 6px; z-index: 6; }
.m1 { right: 15px; top: 665px; width: 14px; height: 81px; padding: 9px 2px 9px 5px; }
.m2 { right: 0; top: 757px; width: 15px; height: 89px; padding: 10px 2px 10px 5px; }
.meter .off { height: 18px; background: repeating-linear-gradient(#383b45 0 2px, #565b6b 2px 3px); }
.meter .lit { flex: 1; background: repeating-linear-gradient(#0000 0 2px, #565b6b99 2px 3px), linear-gradient(#e3ab42, #d2cf52 25%, #93c968 55%, #42c4ae); }

.brand { position: absolute; right: 97px; bottom: 29px; z-index: 20; pointer-events: none; }
.shape { fill: #fff; fill-opacity: .85; filter: drop-shadow(0 0 2px #0006); }
.latin { font: 700 80px "Liberation Sans", sans-serif; }
.han { font: 900 60px "Noto Sans CJK SC", sans-serif; }
.url { font: 400 41px "Noto Sans", sans-serif; }
.du { font: 700 50px "Liberation Sans", sans-serif; fill: #f4f4f4; stroke: #bbb; stroke-width: 2; }
```
